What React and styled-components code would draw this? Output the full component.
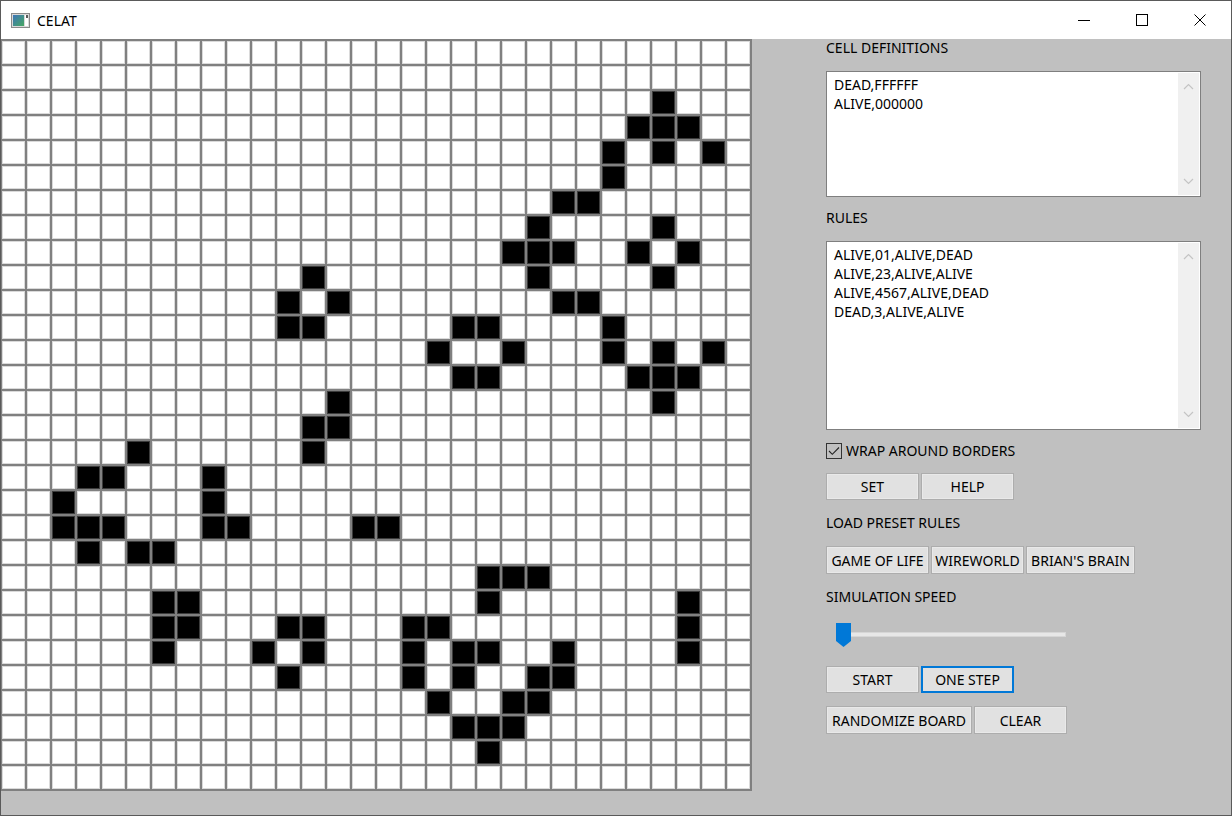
import React from "react";
import styled, { createGlobalStyle, css } from "styled-components";

const GlobalStyle = createGlobalStyle`
  html, body { margin: 0; padding: 0; background: #ffffff; }
  * { box-sizing: border-box; }
  body { font-family: "Noto Sans", "DejaVu Sans", sans-serif; }
`;

const ALIVE = {
  2: [26], 3: [25, 26, 27], 4: [24, 26, 28], 5: [24], 6: [22, 23], 7: [21, 26],
  8: [20, 21, 22, 25, 27], 9: [12, 21, 26], 10: [11, 13, 22, 23], 11: [11, 12, 18, 19, 24],
  12: [17, 20, 24, 26, 28], 13: [18, 19, 25, 26, 27], 14: [13, 26], 15: [12, 13], 16: [5, 12],
  17: [3, 4, 8], 18: [2, 8], 19: [2, 3, 4, 8, 9, 14, 15], 20: [3, 5, 6], 21: [19, 20, 21],
  22: [6, 7, 19, 27], 23: [6, 7, 11, 12, 16, 17, 27], 24: [6, 10, 12, 16, 18, 19, 22, 27],
  25: [11, 16, 18, 21, 22], 26: [17, 20, 21], 27: [18, 19, 20], 28: [19],
};

const Window = styled.div`
  width: 1232px;
  height: 816px;
  border: 1px solid #5a5a5a;
  display: flex;
  flex-direction: column;
  overflow: hidden;
`;

const TitleBar = styled.div`
  height: 38px;
  flex: 0 0 38px;
  background: #ffffff;
  display: flex;
  align-items: center;
  padding-right: 2px;
`;

const AppIcon = styled.svg`
  margin-left: 10px;
  width: 19px;
  height: 15px;
  flex: 0 0 auto;
`;

const Caption = styled.span`
  margin-left: 7px;
  font-size: 14px;
  color: #000;
  flex: 1;
`;

const CaptionButton = styled.div`
  width: 58px;
  height: 38px;
  display: flex;
  align-items: center;
  justify-content: center;
  color: #000;
`;

const Client = styled.div`
  flex: 1;
  background: #c0c0c0;
  display: flex;
  align-items: flex-start;
`;

const Board = styled.div`
  display: grid;
  grid-template-columns: repeat(30, 23px);
  grid-auto-rows: 23px;
  gap: 2px;
  padding: 2px 2px 2px 1px;
  background: #808080;
`;

const Cell = styled.div`
  width: 23px;
  height: 23px;
  background: ${(p) => (p.$alive ? "#000000" : "#ffffff")};
  box-shadow: inset 0 0 0 1px ${(p) => (p.$alive ? "#3c3c3c" : "#dadada")};
`;

const Panel = styled.div`
  margin-left: 74px;
  width: 375px;
  display: flex;
  flex-direction: column;
  font-size: 14px;
  color: #000;
`;

const Label = styled.div`
  height: 18px;
  line-height: 18px;
  margin-top: ${(p) => p.$mt || 0}px;
  white-space: nowrap;
`;

const TextBox = styled.div`
  margin-top: 14px;
  height: ${(p) => p.$h}px;
  border: 1px solid #7f7f7f;
  background: #ffffff;
  padding: 1px;
  display: flex;
`;

const TextContent = styled.div`
  flex: 1;
  padding: 2px 6px;
  line-height: 19px;
  white-space: pre;
`;

const ScrollTrack = styled.div`
  width: 21px;
  background: #f0f0f0;
  display: flex;
  flex-direction: column;
  justify-content: space-between;
  align-items: center;
  padding: 10px 0;
`;

const CheckRow = styled.label`
  margin-top: 12px;
  height: 17px;
  display: flex;
  align-items: center;
  gap: 4px;
  white-space: nowrap;
`;

const CheckBox = styled.svg`
  width: 16px;
  height: 16px;
  flex: 0 0 auto;
`;

const ButtonRow = styled.div`
  margin-top: ${(p) => p.$mt}px;
  display: flex;
  gap: 2px;
`;

const Button = styled.button`
  width: ${(p) => p.$w}px;
  height: ${(p) => p.$h || 27}px;
  padding: 0;
  margin: 0;
  background: #e1e1e1;
  border: 1px solid #adadad;
  box-shadow: inset 0 0 0 1px #e9e9e9;
  font-family: inherit;
  font-size: 14px;
  color: #000;
  white-space: nowrap;
  ${(p) =>
    p.$focused &&
    css`
      border-color: #0078d7;
      box-shadow: inset 0 0 0 1px #0078d7;
    `}
`;

const Slider = styled.div`
  position: relative;
  margin-top: 17px;
  margin-left: 10px;
  width: 230px;
  height: 24px;
`;

const Track = styled.div`
  margin-top: 9px;
  height: 5px;
  background: #e7e7e7;
  border: 1px solid #d6d6d6;
`;

const Thumb = styled.svg`
  position: absolute;
  left: 0;
  top: 0;
  width: 15px;
  height: 24px;
`;

const Chevron = ({ up }) => (
  <svg width="11" height="7" viewBox="0 0 11 7">
    <path
      d={up ? "M1 6 L5.5 1.5 L10 6" : "M1 1 L5.5 5.5 L10 1"}
      fill="none"
      stroke="#c4c4c4"
      strokeWidth="1.2"
    />
  </svg>
);

const Scroll = () => (
  <ScrollTrack>
    <Chevron up />
    <Chevron />
  </ScrollTrack>
);

export default function App() {
  const cells = [];
  for (let r = 0; r < 30; r++) {
    const row = ALIVE[r] || [];
    for (let c = 0; c < 30; c++) {
      cells.push(<Cell key={`${r}-${c}`} $alive={row.includes(c)} />);
    }
  }

  return (
    <>
      <GlobalStyle />
      <Window>
        <TitleBar>
          <AppIcon viewBox="0 0 19 15">
            <defs>
              <linearGradient id="ig" x1="0" y1="0" x2="1" y2="1">
                <stop offset="0" stopColor="#3d74b8" />
                <stop offset="1" stopColor="#46a861" />
              </linearGradient>
            </defs>
            <rect x="0.5" y="0.5" width="18" height="14" fill="#d9d9d9" stroke="#8a8a8a" />
            <rect x="2" y="2" width="11" height="11" fill="url(#ig)" />
            <rect x="14" y="2" width="3" height="11" fill="#ffffff" />
            <rect x="15" y="2" width="2" height="3" fill="#5a5a5a" />
          </AppIcon>
          <Caption>CELAT</Caption>
          <CaptionButton>
            <svg width="12" height="12" viewBox="0 0 12 12">
              <path d="M0 6.5 H12" stroke="#000" strokeWidth="1" />
            </svg>
          </CaptionButton>
          <CaptionButton>
            <svg width="12" height="12" viewBox="0 0 12 12">
              <rect x="0.5" y="0.5" width="11" height="11" fill="none" stroke="#000" strokeWidth="1" />
            </svg>
          </CaptionButton>
          <CaptionButton>
            <svg width="12" height="12" viewBox="0 0 12 12">
              <path d="M0.5 0.5 L11.5 11.5 M11.5 0.5 L0.5 11.5" stroke="#000" strokeWidth="1" />
            </svg>
          </CaptionButton>
        </TitleBar>
        <Client>
          <Board>{cells}</Board>
          <Panel>
            <Label>CELL DEFINITIONS</Label>
            <TextBox $h={126}>
              <TextContent>{"DEAD,FFFFFF\nALIVE,000000"}</TextContent>
              <Scroll />
            </TextBox>
            <Label $mt={12}>RULES</Label>
            <TextBox $h={189}>
              <TextContent>
                {"ALIVE,01,ALIVE,DEAD\nALIVE,23,ALIVE,ALIVE\nALIVE,4567,ALIVE,DEAD\nDEAD,3,ALIVE,ALIVE"}
              </TextContent>
              <Scroll />
            </TextBox>
            <CheckRow>
              <CheckBox viewBox="0 0 16 16">
                <rect x="0.5" y="0.5" width="15" height="15" fill="none" stroke="#333" />
                <path d="M3 8 L6.3 11.3 L13 4.5" fill="none" stroke="#222" strokeWidth="1.1" />
              </CheckBox>
              WRAP AROUND BORDERS
            </CheckRow>
            <ButtonRow $mt={14}>
              <Button $w={93}>SET</Button>
              <Button $w={93}>HELP</Button>
            </ButtonRow>
            <Label $mt={14}>LOAD PRESET RULES</Label>
            <ButtonRow $mt={14}>
              <Button $w={103} $h={28}>GAME OF LIFE</Button>
              <Button $w={93} $h={28}>WIREWORLD</Button>
              <Button $w={109} $h={28}>BRIAN'S BRAIN</Button>
            </ButtonRow>
            <Label $mt={14}>SIMULATION SPEED</Label>
            <Slider>
              <Track />
              <Thumb viewBox="0 0 15 24">
                <path d="M0 0 H15 V18 L7.5 24 L0 18 Z" fill="#0078d7" />
              </Thumb>
            </Slider>
            <ButtonRow $mt={19}>
              <Button $w={93}>START</Button>
              <Button $w={93} $focused>ONE STEP</Button>
            </ButtonRow>
            <ButtonRow $mt={13}>
              <Button $w={146} $h={28}>RANDOMIZE BOARD</Button>
              <Button $w={93} $h={28}>CLEAR</Button>
            </ButtonRow>
          </Panel>
        </Client>
      </Window>
    </>
  );
}
